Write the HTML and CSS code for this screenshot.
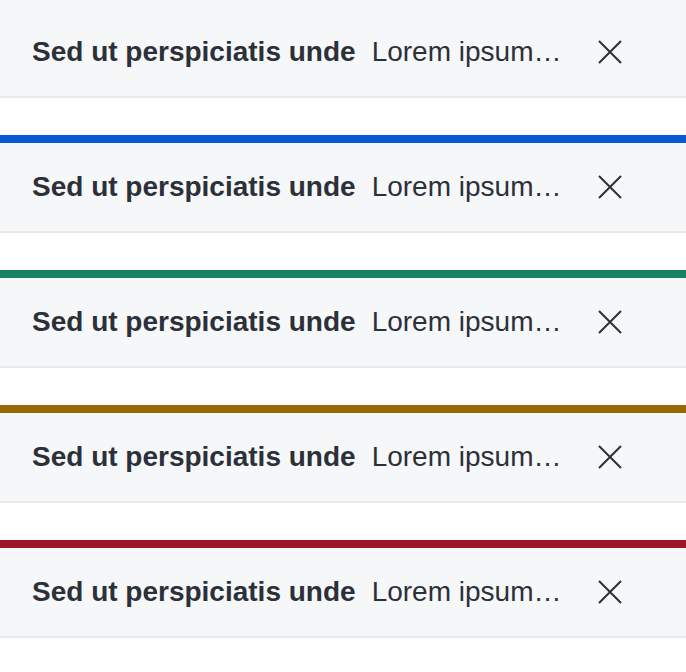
FILE: index.html
```html
<!DOCTYPE html>
<html lang="en">
<head>
<meta charset="utf-8">
<title>Notifications</title>
<link rel="stylesheet" href="styles.css">
</head>
<body>
<div class="stack">
  <div class="note note-neutral">
    <div class="note-body">
      <span class="note-title">Sed ut perspiciatis unde</span>
      <span class="note-text">Lorem ipsum dolor sit amet, consectetur adipiscing elit</span>
      <button class="note-close" aria-label="Close"><svg viewBox="0 0 24 24" width="24" height="24"><path d="M1 1L23 23M23 1L1 23" stroke="currentColor" stroke-width="2" fill="none"/></svg></button>
    </div>
  </div>
  <div class="note note-info">
    <div class="note-body">
      <span class="note-title">Sed ut perspiciatis unde</span>
      <span class="note-text">Lorem ipsum dolor sit amet, consectetur adipiscing elit</span>
      <button class="note-close" aria-label="Close"><svg viewBox="0 0 24 24" width="24" height="24"><path d="M1 1L23 23M23 1L1 23" stroke="currentColor" stroke-width="2" fill="none"/></svg></button>
    </div>
  </div>
  <div class="note note-success">
    <div class="note-body">
      <span class="note-title">Sed ut perspiciatis unde</span>
      <span class="note-text">Lorem ipsum dolor sit amet, consectetur adipiscing elit</span>
      <button class="note-close" aria-label="Close"><svg viewBox="0 0 24 24" width="24" height="24"><path d="M1 1L23 23M23 1L1 23" stroke="currentColor" stroke-width="2" fill="none"/></svg></button>
    </div>
  </div>
  <div class="note note-warning">
    <div class="note-body">
      <span class="note-title">Sed ut perspiciatis unde</span>
      <span class="note-text">Lorem ipsum dolor sit amet, consectetur adipiscing elit</span>
      <button class="note-close" aria-label="Close"><svg viewBox="0 0 24 24" width="24" height="24"><path d="M1 1L23 23M23 1L1 23" stroke="currentColor" stroke-width="2" fill="none"/></svg></button>
    </div>
  </div>
  <div class="note note-error">
    <div class="note-body">
      <span class="note-title">Sed ut perspiciatis unde</span>
      <span class="note-text">Lorem ipsum dolor sit amet, consectetur adipiscing elit</span>
      <button class="note-close" aria-label="Close"><svg viewBox="0 0 24 24" width="24" height="24"><path d="M1 1L23 23M23 1L1 23" stroke="currentColor" stroke-width="2" fill="none"/></svg></button>
    </div>
  </div>
</div>
</body>
</html>
```
FILE: styles.css
```css
html, body {
  margin: 0;
  padding: 0;
  background: #ffffff;
}
body {
  font-family: "Liberation Sans", Arial, sans-serif;
  color: #2b3039;
}
.stack {
  display: flex;
  flex-direction: column;
  gap: 37px;
}
.note {
  background: #f6f7f9;
  border-top: 8px solid #f6f7f9;
  border-bottom: 2px solid #e8e9ed;
}
.note-info { border-top-color: #0a5ad4; }
.note-success { border-top-color: #177f62; }
.note-warning { border-top-color: #966a00; }
.note-error { border-top-color: #9c1426; }
.note-body {
  height: 88px;
  display: flex;
  align-items: center;
  padding: 0 64px 0 32px;
  font-size: 28px;
  line-height: 32px;
}
.note-title {
  font-weight: 700;
  white-space: nowrap;
  margin-right: 16px;
}
.note-text {
  flex: 1;
  min-width: 0;
  white-space: nowrap;
  overflow: hidden;
  text-overflow: ellipsis;
}
.note-close {
  flex: none;
  margin-left: 33px;
  width: 24px;
  height: 24px;
  padding: 0;
  border: 0;
  background: none;
  color: #2b3039;
  display: flex;
}
```
